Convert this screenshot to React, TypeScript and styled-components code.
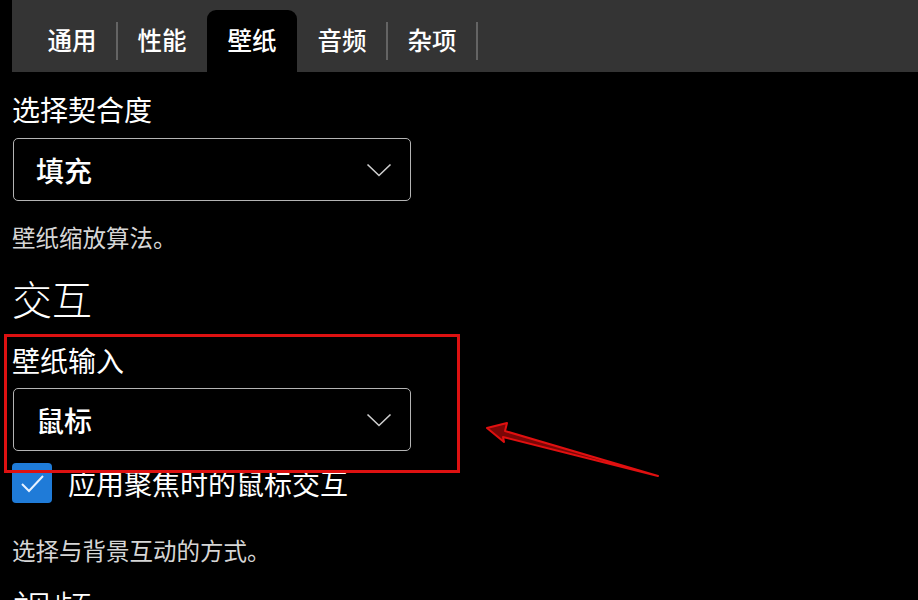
import React from "react";
import styled, { createGlobalStyle } from "styled-components";

const Global = createGlobalStyle`
  html, body { margin: 0; padding: 0; background: #000; }
  body { font-family: "Noto Sans CJK SC", "Noto Sans", sans-serif; color: #fff; overflow: hidden; }
  * { box-sizing: border-box; }
`;

const Page = styled.div`
  position: relative;
  width: 918px;
  height: 600px;
  overflow: hidden;
  background: #000;
`;

const TabBar = styled.div`
  margin-left: 12px;
  height: 72px;
  background: #343434;
  padding-left: 15px;
  display: flex;
  align-items: flex-end;
`;

const Tab = styled.div<{ $active?: boolean; $divider?: boolean }>`
  position: relative;
  width: 90px;
  height: 62px;
  display: flex;
  align-items: center;
  justify-content: center;
  padding-bottom: 4px;
  font-size: 24.5px;
  font-weight: 500;
  color: #fff;
  background: ${(p) => (p.$active ? "#000" : "transparent")};
  border-radius: ${(p) => (p.$active ? "9px 9px 0 0" : "0")};
  &::after {
    content: "";
    display: ${(p) => (p.$divider ? "block" : "none")};
    position: absolute;
    right: -1px;
    top: 12px;
    width: 2px;
    height: 38px;
    background: #646464;
  }
`;

const Content = styled.div`
  padding-left: 12px;
  display: flex;
  flex-direction: column;
  align-items: flex-start;
`;

const Label = styled.div<{ $mt: number }>`
  margin-top: ${(p) => p.$mt}px;
  font-size: 28px;
  line-height: 36px;
  font-weight: 400;
  color: #fff;
`;

const Desc = styled.div<{ $mt: number }>`
  margin-top: ${(p) => p.$mt}px;
  font-size: 23.5px;
  line-height: 30px;
  font-weight: 400;
  color: #d6d6d6;
`;

const Heading = styled.div<{ $mt: number }>`
  margin-top: ${(p) => p.$mt}px;
  font-size: 40px;
  line-height: 48px;
  font-weight: 300;
  color: #fff;
`;

const Select = styled.div<{ $mt: number }>`
  margin-top: ${(p) => p.$mt}px;
  margin-left: 1px;
  width: 398px;
  height: 63px;
  border: 1.5px solid #b4b4b4;
  border-radius: 5px;
  display: flex;
  align-items: center;
  justify-content: space-between;
  padding: 0 18px 0 22px;
  font-size: 28px;
  font-weight: 500;
  color: #fff;
`;

const CheckRow = styled.div<{ $mt: number }>`
  margin-top: ${(p) => p.$mt}px;
  display: flex;
  align-items: center;
  gap: 16px;
  height: 40px;
  font-size: 28px;
  color: #fff;
`;

const Box = styled.div`
  width: 40px;
  height: 40px;
  border-radius: 4px;
  background: #1f7bd8;
  display: flex;
  align-items: center;
  justify-content: center;
`;

const Overlay = styled.svg`
  position: absolute;
  left: 0;
  top: 0;
  pointer-events: none;
`;

const Chevron = () => (
  <svg width="26" height="14" viewBox="0 0 26 14">
    <path d="M1.5 1.5 L13 12.5 L24.5 1.5" fill="none" stroke="#cfcfcf" strokeWidth="1.6" />
  </svg>
);

export default function App() {
  return (
    <Page>
      <Global />
      <TabBar>
        <Tab $divider>通用</Tab>
        <Tab>性能</Tab>
        <Tab $active>壁纸</Tab>
        <Tab $divider>音频</Tab>
        <Tab $divider>杂项</Tab>
      </TabBar>
      <Content>
        <Label $mt={19}>选择契合度</Label>
        <Select $mt={11}>
          <span>填充</span>
          <Chevron />
        </Select>
        <Desc $mt={21}>壁纸缩放算法。</Desc>
        <Heading $mt={22}>交互</Heading>
        <Label $mt={20}>壁纸输入</Label>
        <Select $mt={10}>
          <span>鼠标</span>
          <Chevron />
        </Select>
        <CheckRow $mt={12}>
          <Box>
            <svg width="26" height="20" viewBox="0 0 26 20">
              <path d="M3 11 L10 18 L24 3" fill="none" stroke="#e8f2ff" strokeWidth="2" />
            </svg>
          </Box>
          <span>应用聚焦时的鼠标交互</span>
        </CheckRow>
        <Desc $mt={32}>选择与背景互动的方式。</Desc>
        <Heading $mt={19}>视频</Heading>
      </Content>
      <Overlay width="918" height="600" viewBox="0 0 918 600">
        <rect x="5.5" y="335.5" width="453" height="136" fill="none" stroke="#dd1111" strokeWidth="3" />
        <polygon
          points="487,428 507,423 505,431 658,476 503,437 504,442"
          fill="#7a0606"
          stroke="#e01010"
          strokeWidth="2"
          strokeLinejoin="round"
        />
      </Overlay>
    </Page>
  );
}
